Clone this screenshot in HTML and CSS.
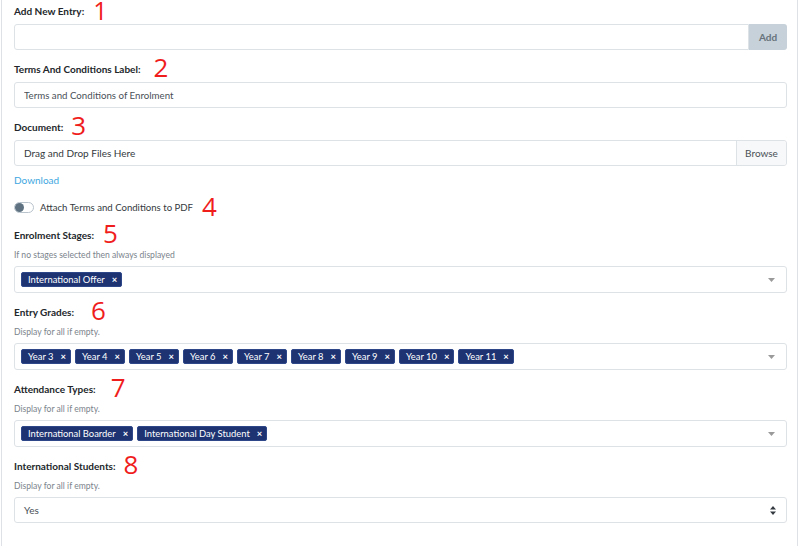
FILE: index.html
```html
<!DOCTYPE html>
<html lang="en">
<head>
    <meta charset="UTF-8">
    <meta name="viewport" content="width=device-width, initial-scale=1.0">
    <title>Terms and Conditions</title>
    <link rel="stylesheet" href="styles.css">
</head>
<body>
    <div class="panel">
        <div class="field">
            <label class="field-label">Add New Entry:<span class="mark mark-1">1</span></label>
            <div class="input-group">
                <input class="form-control" type="text">
                <button class="btn-add">Add</button>
            </div>
        </div>

        <div class="field">
            <label class="field-label">Terms And Conditions Label:<span class="mark mark-2">2</span></label>
            <input class="form-control" type="text" value="Terms and Conditions of Enrolment">
        </div>

        <div class="field field-tight">
            <label class="field-label">Document:<span class="mark mark-3">3</span></label>
            <div class="file-box">
                <span class="file-text">Drag and Drop Files Here</span>
                <span class="file-browse">Browse</span>
            </div>
        </div>
        <a class="download" href="#">Download</a>

        <div class="switch-row">
            <span class="switch"><span class="switch-knob"></span></span>
            <span class="switch-label">Attach Terms and Conditions to PDF</span>
            <span class="mark mark-4">4</span>
        </div>

        <div class="field">
            <label class="field-label">Enrolment Stages:<span class="mark mark-5">5</span></label>
            <div class="help">If no stages selected then always displayed</div>
            <div class="multi">
                <span class="tag">International Offer<span class="tag-x">×</span></span>
                <span class="caret"><svg width="7" height="4" viewBox="0 0 7 4"><path d="M0 0h7L3.5 4z" fill="#9a9a9a"/></svg></span>
            </div>
        </div>

        <div class="field">
            <label class="field-label">Entry Grades:<span class="mark mark-6">6</span></label>
            <div class="help">Display for all if empty.</div>
            <div class="multi">
                <span class="tag">Year 3<span class="tag-x">×</span></span>
                <span class="tag">Year 4<span class="tag-x">×</span></span>
                <span class="tag">Year 5<span class="tag-x">×</span></span>
                <span class="tag">Year 6<span class="tag-x">×</span></span>
                <span class="tag">Year 7<span class="tag-x">×</span></span>
                <span class="tag">Year 8<span class="tag-x">×</span></span>
                <span class="tag">Year 9<span class="tag-x">×</span></span>
                <span class="tag">Year 10<span class="tag-x">×</span></span>
                <span class="tag">Year 11<span class="tag-x">×</span></span>
                <span class="caret"><svg width="7" height="4" viewBox="0 0 7 4"><path d="M0 0h7L3.5 4z" fill="#9a9a9a"/></svg></span>
            </div>
        </div>

        <div class="field">
            <label class="field-label">Attendance Types:<span class="mark mark-7">7</span></label>
            <div class="help">Display for all if empty.</div>
            <div class="multi">
                <span class="tag">International Boarder<span class="tag-x">×</span></span>
                <span class="tag">International Day Student<span class="tag-x">×</span></span>
                <span class="caret"><svg width="7" height="4" viewBox="0 0 7 4"><path d="M0 0h7L3.5 4z" fill="#9a9a9a"/></svg></span>
            </div>
        </div>

        <div class="field">
            <label class="field-label">International Students:<span class="mark mark-8">8</span></label>
            <div class="help">Display for all if empty.</div>
            <div class="select">
                <span>Yes</span>
                <svg width="6" height="9" viewBox="0 0 6 9"><path d="M0 3.5L3 0l3 3.5zM0 5.5h6L3 9z" fill="#343a40"/></svg>
            </div>
        </div>
    </div>
</body>
</html>
```

FILE: styles.css
```css
* {
    box-sizing: border-box;
}

body {
    margin: 0;
    font-family: Lato, 'Liberation Sans', Arial, sans-serif;
    font-size: 10px;
    color: #212529;
    background-color: #fff;
}

.panel {
    min-height: 100vh;
    margin: 0 2px 0 1px;
    padding: 3px 10px 20px 12px;
    border-left: 1px solid #dee2e6;
    border-right: 1px solid #dee2e6;
}

.field {
    margin-bottom: 11px;
}

.field-tight {
    margin-bottom: 0;
}

.field-label {
    display: block;
    font-size: 10px;
    font-weight: 700;
    line-height: 17px;
    margin-bottom: 4px;
    color: #23272b;
}

/* red annotation numbers */
.mark {
    display: inline-block;
    position: relative;
    top: 4px;
    line-height: 0;
    font-family: 'Open Sans', 'Noto Sans', sans-serif;
    font-size: 26px;
    font-weight: 400;
    color: #f01d1d;
}

.mark-1 { margin-left: 9px; top: 5px; font-size: 25px; }
.mark-2 { margin-left: 13px; }
.mark-3 { margin-left: 8px; }
.mark-4 { margin-left: 9px; }
.mark-5 { margin-left: 9px; }
.mark-6 { margin-left: 17px; }
.mark-7 { margin-left: 15px; }
.mark-8 { margin-left: 8px; }

.form-control {
    display: block;
    width: 100%;
    height: 26px;
    padding: 0 9px;
    border: 1px solid #dde2e6;
    border-radius: 3px;
    font-family: inherit;
    font-size: 9.7px;
    color: #495057;
    background-color: #fff;
    outline: none;
}

.input-group {
    display: flex;
}

.input-group .form-control {
    flex: 1;
    border-radius: 3px 0 0 3px;
}

.btn-add {
    width: 38px;
    height: 26px;
    border: none;
    border-radius: 0 3px 3px 0;
    background-color: #c6d1d9;
    color: #68737c;
    font-family: inherit;
    font-size: 10px;
    font-weight: 700;
    padding: 0;
}

.file-box {
    display: flex;
    height: 26px;
    border: 1px solid #dde2e6;
    border-radius: 3px;
    color: #343a40;
}

.file-text {
    flex: 1;
    padding-left: 9px;
    line-height: 24px;
}

.file-browse {
    width: 50px;
    line-height: 24px;
    text-align: center;
    border-left: 1px solid #dde2e6;
    background-color: #f7f8f9;
    color: #495057;
    border-radius: 0 3px 3px 0;
}

.download {
    display: block;
    margin-top: 6px;
    line-height: 16px;
    color: #3ea7e1;
    text-decoration: none;
}

.switch-row {
    display: flex;
    align-items: center;
    height: 18px;
    margin-top: 10px;
    margin-bottom: 11px;
}

.switch-row .mark {
    top: -1px;
}

.switch {
    display: flex;
    align-items: center;
    width: 20px;
    height: 11px;
    border: 1px solid #b9c3cc;
    border-radius: 6px;
    margin-right: 6px;
}

.switch-knob {
    width: 9px;
    height: 9px;
    border-radius: 50%;
    background-color: #5e7282;
}

.switch-label {
    font-size: 9.6px;
    color: #343a40;
}

.help {
    font-size: 8.6px;
    line-height: 14px;
    color: #7b848c;
    margin-bottom: 4px;
}

.multi {
    display: flex;
    flex-wrap: wrap;
    align-items: center;
    gap: 4px;
    min-height: 27px;
    padding: 5px 11px 5px 6px;
    border: 1px solid #dde2e6;
    border-radius: 3px;
}

.tag {
    display: flex;
    align-items: center;
    height: 15px;
    padding: 0 4px 0 6px;
    border: 1px solid #2d4789;
    border-radius: 2px;
    background-color: #1d3372;
    color: #fff;
    font-size: 9.4px;
}

.tag-x {
    margin-left: 7px;
    font-size: 9.5px;
    font-weight: 700;
}

.caret {
    display: flex;
    margin-left: auto;
}

.select {
    display: flex;
    align-items: center;
    justify-content: space-between;
    height: 26px;
    padding: 0 10px 0 9px;
    border: 1px solid #dde2e6;
    border-radius: 3px;
    color: #495057;
}
```
